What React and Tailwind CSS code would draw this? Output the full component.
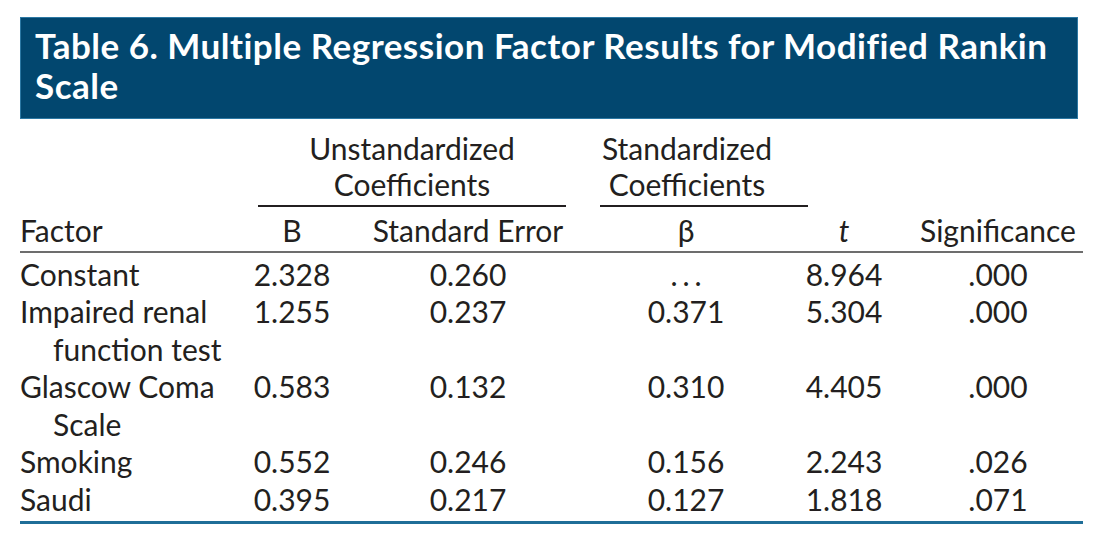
import React from "react";

const rows = [
  { f: ["Constant"], b: "2.328", se: "0.260", beta: "dots", t: "8.964", s: ".000" },
  { f: ["Impaired renal", "function test"], b: "1.255", se: "0.237", beta: "0.371", t: "5.304", s: ".000" },
  { f: ["Glascow Coma", "Scale"], b: "0.583", se: "0.132", beta: "0.310", t: "4.405", s: ".000" },
  { f: ["Smoking"], b: "0.552", se: "0.246", beta: "0.156", t: "2.243", s: ".026" },
  { f: ["Saudi"], b: "0.395", se: "0.217", beta: "0.127", t: "1.818", s: ".071" },
];

const App = () => {
  return (
    <div
      className="w-[1103px] h-[556px] bg-white pt-[17px] px-[20px] text-[#231f20]"
      style={{ fontFamily: "Lato, 'Open Sans', sans-serif" }}
    >
      <div className="w-[1058px] h-[102px] bg-[#02476f] border border-[#2c78a3] pl-[14px] pt-[7px] text-white font-bold text-[35px] leading-[40px] tracking-[0.5px]">
        Table 6. Multiple Regression Factor Results for Modified Rankin
        <br />
        Scale
      </div>

      <div className="text-[30px]">
        {/* grouped column headings */}
        <div className="flex mt-[11px]">
          <div className="w-[238px]" />
          <div className="w-[308px] flex flex-col">
            <div className="text-center leading-[36px]">
              Unstandardized
              <br />
              Coefficients
            </div>
            <div className="mt-[3px] h-[2px] bg-[#231f20]" />
          </div>
          <div className="w-[34px]" />
          <div className="w-[208px] flex flex-col">
            <div className="w-[174px] text-center leading-[36px]">
              Standardized
              <br />
              Coefficients
            </div>
            <div className="mt-[3px] h-[2px] bg-[#231f20]" />
          </div>
        </div>

        <div className="grid grid-cols-[230px_84px_268px_168px_148px_160px] mt-[5px] leading-[37.5px] pb-[1px] border-b-2 border-[#6d6d6d]">
          <div>Factor</div>
          <div className="text-center">B</div>
          <div className="text-center">Standard Error</div>
          <div className="text-center">β</div>
          <div className="text-center italic">t</div>
          <div className="text-center">Significance</div>
        </div>

        <div className="mt-[3px] pb-[3px] border-b-[3px] border-[#1f6e98]">
          {rows.map((r) => (
            <div
              key={r.f[0]}
              className="grid grid-cols-[230px_84px_268px_168px_148px_160px] leading-[37.5px]"
            >
              <div className="pl-[33px] -indent-[33px]">
                {r.f[0]}
                {r.f[1] && (
                  <>
                    <br />
                    {r.f[1]}
                  </>
                )}
              </div>
              <div className="text-center">{r.b}</div>
              <div className="text-center">{r.se}</div>
              <div className="text-center">
                {r.beta === "dots" ? (
                  <span className="tracking-[5px] pl-[5px]">...</span>
                ) : (
                  r.beta
                )}
              </div>
              <div className="text-center">{r.t}</div>
              <div className="text-center">{r.s}</div>
            </div>
          ))}
        </div>
      </div>
    </div>
  );
};

export default App;
